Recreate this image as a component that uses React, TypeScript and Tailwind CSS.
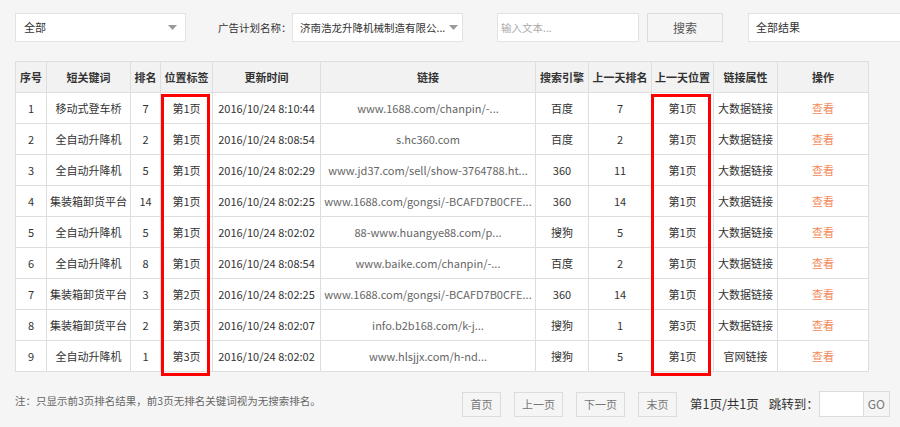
import React from 'react';

type Row = {
  id: number;
  keyword: string;
  rank: number;
  page: string;
  time: string;
  link: string;
  engine: string;
  prevRank: number;
  prevPage: string;
  attr: string;
};

const rows: Row[] = [
  { id: 1, keyword: '移动式登车桥', rank: 7, page: '第1页', time: '2016/10/24 8:10:44', link: 'www.1688.com/chanpin/-...', engine: '百度', prevRank: 7, prevPage: '第1页', attr: '大数据链接' },
  { id: 2, keyword: '全自动升降机', rank: 2, page: '第1页', time: '2016/10/24 8:08:54', link: 's.hc360.com', engine: '百度', prevRank: 2, prevPage: '第1页', attr: '大数据链接' },
  { id: 3, keyword: '全自动升降机', rank: 5, page: '第1页', time: '2016/10/24 8:02:29', link: 'www.jd37.com/sell/show-3764788.ht...', engine: '360', prevRank: 11, prevPage: '第1页', attr: '大数据链接' },
  { id: 4, keyword: '集装箱卸货平台', rank: 14, page: '第1页', time: '2016/10/24 8:02:25', link: 'www.1688.com/gongsi/-BCAFD7B0CFE...', engine: '360', prevRank: 14, prevPage: '第1页', attr: '大数据链接' },
  { id: 5, keyword: '全自动升降机', rank: 5, page: '第1页', time: '2016/10/24 8:02:02', link: '88-www.huangye88.com/p...', engine: '搜狗', prevRank: 5, prevPage: '第1页', attr: '大数据链接' },
  { id: 6, keyword: '全自动升降机', rank: 8, page: '第1页', time: '2016/10/24 8:08:54', link: 'www.baike.com/chanpin/-...', engine: '百度', prevRank: 2, prevPage: '第1页', attr: '大数据链接' },
  { id: 7, keyword: '集装箱卸货平台', rank: 3, page: '第2页', time: '2016/10/24 8:02:25', link: 'www.1688.com/gongsi/-BCAFD7B0CFE...', engine: '360', prevRank: 14, prevPage: '第1页', attr: '大数据链接' },
  { id: 8, keyword: '集装箱卸货平台', rank: 2, page: '第3页', time: '2016/10/24 8:02:07', link: 'info.b2b168.com/k-j...', engine: '搜狗', prevRank: 1, prevPage: '第3页', attr: '大数据链接' },
  { id: 9, keyword: '全自动升降机', rank: 1, page: '第3页', time: '2016/10/24 8:02:02', link: 'www.hlsjjx.com/h-nd...', engine: '搜狗', prevRank: 5, prevPage: '第1页', attr: '官网链接' },
];

const headers: { label: string; w: string }[] = [
  { label: '序号', w: 'w-[31px]' },
  { label: '短关键词', w: 'w-[84px]' },
  { label: '排名', w: 'w-[30px]' },
  { label: '位置标签', w: 'w-[52px]' },
  { label: '更新时间', w: 'w-[108px]' },
  { label: '链接', w: 'w-[215px]' },
  { label: '搜索引擎', w: 'w-[53px]' },
  { label: '上一天排名', w: 'w-[63px]' },
  { label: '上一天位置', w: 'w-[62px]' },
  { label: '链接属性', w: 'w-[64px]' },
  { label: '操作', w: 'w-[91px]' },
];

const td = 'h-[31px] overflow-hidden whitespace-nowrap border border-[#dedede] p-0 text-center';

const Caret = () => (
  <svg width="9" height="5" viewBox="0 0 9 5" className="shrink-0">
    <path d="M0 0h9L4.5 5z" fill="#999" />
  </svg>
);

const Select: React.FC<{ text: string; className: string }> = ({ text, className }) => (
  <div className={`flex h-[29px] shrink-0 items-center justify-between gap-[2px] border border-[#e3e3e3] bg-white text-[#333] ${className}`}>
    <span className="whitespace-nowrap">{text}</span>
    <Caret />
  </div>
);

const PageBtn: React.FC<{ text: string; w: string }> = ({ text, w }) => (
  <button className={`flex h-[25px] shrink-0 items-center justify-center border border-[#dcdcdc] bg-[#f5f5f5] text-[11px] text-[#777] ${w}`}>
    {text}
  </button>
);

export default function App() {
  return (
    <div className="h-[427px] w-[900px] overflow-hidden bg-[#f5f5f5] font-['Noto_Sans_CJK_SC',sans-serif] text-[11px] text-[#333]">
      <div className="flex items-center pl-[15px] pt-[13px]">
        <Select text="全部" className="w-[171px] pl-[8px] pr-[8px] text-[11px]" />
        <span className="ml-[32px] w-[74px] shrink-0 whitespace-nowrap text-[10.5px]">广告计划名称：</span>
        <Select text="济南浩龙升降机械制造有限公..." className="w-[171px] pl-[7px] pr-[4px] text-[10.5px]" />
        <div className="ml-[34px] flex h-[29px] w-[142px] shrink-0 items-center border border-[#e3e3e3] bg-white pl-[3px] text-[10.5px] text-[#aaa]">
          输入文本...
        </div>
        <button className="ml-[8px] h-[29px] w-[76px] shrink-0 border border-[#dcdcdc] bg-[#f5f5f5] text-[12px] text-[#555]">搜索</button>
        <div className="ml-[25px] flex h-[29px] w-[200px] shrink-0 items-center border border-[#e3e3e3] bg-white pl-[7px] text-[11px]">
          全部结果
        </div>
      </div>

      <div className="relative ml-[15px] mt-[19px] w-[853px]">
        <table className="w-[853px] table-fixed border-collapse">
          <thead>
            <tr className="bg-[#f2f2f2]">
              {headers.map((h) => (
                <th key={h.label} className={`${h.w} h-[31px] whitespace-nowrap border border-[#dedede] p-0 text-center text-[11px] font-bold text-[#333]`}>
                  {h.label}
                </th>
              ))}
            </tr>
          </thead>
          <tbody>
            {rows.map((r) => (
              <tr key={r.id} className="bg-white">
                <td className={td}>{r.id}</td>
                <td className={td}>{r.keyword}</td>
                <td className={td}>{r.rank}</td>
                <td className={td}>{r.page}</td>
                <td className={td}>{r.time}</td>
                <td className={`${td} text-[#666]`}>{r.link}</td>
                <td className={td}>{r.engine}</td>
                <td className={td}>{r.prevRank}</td>
                <td className={td}>{r.prevPage}</td>
                <td className={td}>{r.attr}</td>
                <td className={`${td} text-[#f4895a]`}>查看</td>
              </tr>
            ))}
          </tbody>
        </table>
        {/* highlight boxes over the page columns */}
        <div className="pointer-events-none absolute left-[146px] top-[33px] h-[282px] w-[49px] border-[3px] border-[#ff0000]" />
        <div className="pointer-events-none absolute left-[636px] top-[33px] h-[282px] w-[60px] border-[3px] border-[#ff0000]" />
      </div>

      <div className="mt-[19px] flex items-start pl-[15px]">
        <span className="mt-[2px] w-[447px] shrink-0 whitespace-nowrap text-[10.5px] text-[#666]">注：只显示前3页排名结果，前3页无排名关键词视为无搜索排名。</span>
        <div className="flex items-center">
          <PageBtn text="首页" w="w-[39px]" />
          <div className="ml-[13px]"><PageBtn text="上一页" w="w-[49px]" /></div>
          <div className="ml-[13px]"><PageBtn text="下一页" w="w-[49px]" /></div>
          <div className="ml-[13px]"><PageBtn text="末页" w="w-[39px]" /></div>
          <span className="ml-[13px] whitespace-nowrap text-[12.5px] text-[#333]">第1页/共1页</span>
          <span className="ml-[10px] whitespace-nowrap text-[12.5px] text-[#333]">跳转到：</span>
          <div className="flex h-[26px] border border-[#dcdcdc]">
            <div className="w-[43px] bg-white" />
            <div className="flex w-[26px] items-center justify-center border-l border-[#dcdcdc] bg-[#f5f5f5] text-[12px] text-[#777]">GO</div>
          </div>
        </div>
      </div>
    </div>
  );
}
